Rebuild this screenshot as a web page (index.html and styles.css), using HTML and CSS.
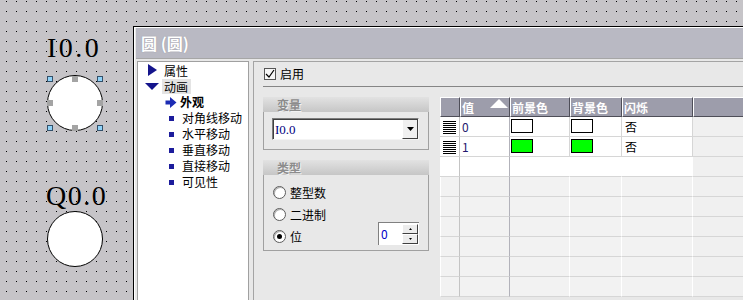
FILE: index.html
```html
<!DOCTYPE html>
<html lang="zh-CN">
<head>
    <meta charset="UTF-8">
    <meta name="viewport" content="width=device-width, initial-scale=1.0">
    <title>圆 (圆)</title>
    <link rel="stylesheet" href="styles.css">
</head>
<body>

    <!-- canvas objects -->
    <div class="tag tag-i">I0.0</div>
    <div class="lamp lamp-i">
        <span class="grip corner g-tl"></span>
        <span class="grip corner g-tr"></span>
        <span class="grip corner g-bl"></span>
        <span class="grip corner g-br"></span>
        <span class="grip mid g-t"></span>
        <span class="grip mid g-b"></span>
        <span class="grip mid g-l"></span>
        <span class="grip mid g-r"></span>
    </div>
    <div class="tag tag-q">Q0.0</div>
    <div class="lamp lamp-q"></div>

    <!-- properties window -->
    <div class="win">
        <div class="win-title">圆 (圆)</div>
        <div class="win-body">

            <ul class="tree">
                <li class="node">
                    <span class="tw"><svg width="9" height="12" viewBox="0 0 9 12"><polygon points="0,0 9,6 0,12" fill="#14148c"/></svg></span>
                    <span class="lbl">属性</span>
                </li>
                <li class="node">
                    <span class="tw"><svg width="14" height="7" viewBox="0 0 14 7"><polygon points="0,0 14,0 7,7" fill="#14148c"/></svg></span>
                    <span class="lbl sel">动画</span>
                </li>
                <li class="leaf cur">
                    <span class="ic"><svg width="12" height="11" viewBox="0 0 12 11"><path d="M0.5 3.5 H5 V0 L11.5 5.5 L5 11 V7.5 H0.5 Z" fill="#1c2cb4"/></svg></span>
                    <span class="lbl">外观</span>
                </li>
                <li class="leaf"><span class="ic"><i class="sq"></i></span><span class="lbl">对角线移动</span></li>
                <li class="leaf"><span class="ic"><i class="sq"></i></span><span class="lbl">水平移动</span></li>
                <li class="leaf"><span class="ic"><i class="sq"></i></span><span class="lbl">垂直移动</span></li>
                <li class="leaf"><span class="ic"><i class="sq"></i></span><span class="lbl">直接移动</span></li>
                <li class="leaf"><span class="ic"><i class="sq"></i></span><span class="lbl">可见性</span></li>
            </ul>

            <div class="pane">
                <div class="enable">
                    <span class="chk"><svg width="10" height="10" viewBox="0 0 10 10"><polyline points="1,5 4,8 9,1" fill="none" stroke="#000" stroke-width="1.2"/></svg></span>
                    <span>启用</span>
                </div>

                <div class="main">
                    <div class="groups">
                        <div class="group">
                            <div class="group-head">变量</div>
                            <div class="group-body var-body">
                                <div class="combo">
                                    <span class="combo-text">I0.0</span>
                                    <span class="combo-btn"><svg width="7" height="4" viewBox="0 0 7 4"><polygon points="0,0 7,0 3.5,4" fill="#000"/></svg></span>
                                </div>
                            </div>
                        </div>

                        <div class="group type-group">
                            <div class="group-head">类型</div>
                            <div class="group-body type-body">
                                <div class="opt"><span class="radio"></span>整型数</div>
                                <div class="opt"><span class="radio"></span>二进制</div>
                                <div class="opt">
                                    <span class="radio on"></span>位
                                    <div class="spin">
                                        <span class="spin-in">0</span>
                                        <span class="spin-btns">
                                            <span class="spin-btn"><svg width="3" height="2" viewBox="0 0 3 2"><polygon points="1.5,0 3,2 0,2" fill="#000"/></svg></span>
                                            <span class="spin-btn"><svg width="3" height="2" viewBox="0 0 3 2"><polygon points="0,0 3,0 1.5,2" fill="#000"/></svg></span>
                                        </span>
                                    </div>
                                </div>
                            </div>
                        </div>
                    </div>

                    <div class="grid">
                        <div class="hc"></div>
                        <div class="hc sort">值<span class="tri-up"></span></div>
                        <div class="hc">前景色</div>
                        <div class="hc">背景色</div>
                        <div class="hc">闪烁</div>
                        <div class="hc"></div>

                        <div class="c rh"><span class="ri"></span></div>
                        <div class="c cv num">0</div>
                        <div class="c sw"><span class="swatch"></span></div>
                        <div class="c sw"><span class="swatch"></span></div>
                        <div class="c txt">否</div>
                        <div class="c fill"></div>

                        <div class="c rh"><span class="ri"></span></div>
                        <div class="c cv num">1</div>
                        <div class="c sw"><span class="swatch green"></span></div>
                        <div class="c sw"><span class="swatch green"></span></div>
                        <div class="c txt">否</div>
                        <div class="c fill"></div>

                        <div class="c rh new"></div>
                        <div class="c cv new"></div>
                        <div class="c new open"></div>
                        <div class="c new open"></div>
                        <div class="c new open"></div>
                        <div class="c fill"></div>

                        <div class="c rh e"></div><div class="c cv e"></div><div class="c e"></div><div class="c e"></div><div class="c e"></div><div class="c fill"></div>
                        <div class="c rh e"></div><div class="c cv e"></div><div class="c e"></div><div class="c e"></div><div class="c e"></div><div class="c fill"></div>
                        <div class="c rh e"></div><div class="c cv e"></div><div class="c e"></div><div class="c e"></div><div class="c e"></div><div class="c fill"></div>
                        <div class="c rh e"></div><div class="c cv e"></div><div class="c e"></div><div class="c e"></div><div class="c e"></div><div class="c fill"></div>
                        <div class="c rh e"></div><div class="c cv e"></div><div class="c e"></div><div class="c e"></div><div class="c e"></div><div class="c fill"></div>
                        <div class="c rh e"></div><div class="c cv e"></div><div class="c e"></div><div class="c e"></div><div class="c e"></div><div class="c fill"></div>
                    </div>
                </div>
            </div>

        </div>
    </div>

</body>
</html>
```

FILE: styles.css
```css
* {
    box-sizing: border-box;
}
html, body {
    margin: 0;
}
body {
    position: relative;
    width: 743px;
    height: 300px;
    overflow: hidden;
    background-color: #c6c4c8;
    background-image: conic-gradient(from 270deg at 1px 1px, #000 90deg, transparent 0);
    background-size: 10px 10px;
    background-position: 6px 1px;
    font-family: "Noto Sans CJK SC", "Noto Sans", sans-serif;
    font-size: 12px;
    color: #000;
}

/* canvas objects */
.tag {
    position: absolute;
    font-family: "Liberation Serif", serif;
    font-size: 28px;
    line-height: 1;
    letter-spacing: 2.5px;
}
.tag-i { left: 47px; top: 34px; }
.tag-q { left: 46px; top: 182px; letter-spacing: 1.5px; }

.lamp {
    position: absolute;
    width: 56px;
    height: 56px;
    border: 1px solid #000;
    border-radius: 50%;
    background: #fff;
}
.lamp-i { left: 47px; top: 75px; }
.lamp-q { left: 47px; top: 211px; }

.grip {
    position: absolute;
    width: 6px;
    height: 6px;
}
.grip.corner {
    background: #8fd2f8;
    border: 1px solid #33506a;
}
.grip.mid {
    background: #a4a4a4;
}
.g-tl { left: -1px; top: 0; }
.g-tr { right: -1px; top: 0; }
.g-bl { left: -1px; bottom: -1px; }
.g-br { right: -1px; bottom: -1px; }
.g-t { left: 24px; top: 0; }
.g-b { left: 24px; bottom: -1px; }
.g-l { left: -1px; top: 24px; }
.g-r { right: -1px; top: 24px; }

/* window */
.win {
    position: absolute;
    left: 133px;
    top: 26px;
    width: 610px;
    height: 274px;
    overflow: hidden;
    border: 1px solid #000;
    border-right: 0;
    border-bottom: 0;
    padding: 1px 0 0 2px;
    background: #e8e8e8;
    box-shadow: inset 1px 1px 0 #fff;
}
.win-title {
    height: 31px;
    padding-left: 5px;
    background: #b9b9c3;
    border-bottom: 1px solid #a6a6a6;
    color: #fff;
    font-size: 16px;
    font-weight: bold;
    line-height: 30px;
    text-shadow: 0 0 1px #8c8c98;
}
.win-body {
    display: flex;
    padding: 2px 0 0 1px;
}

/* tree */
.tree {
    flex: none;
    width: 112px;
    height: 239px;
    margin: 0;
    padding: 0;
    list-style: none;
    background: #fff;
    border: 1px solid #a0a0a0;
    border-bottom: 0;
}
.tree li {
    display: flex;
    align-items: center;
    height: 16px;
    line-height: 16px;
    white-space: nowrap;
}
.tw {
    display: flex;
    justify-content: center;
    width: 14px;
    margin-left: 7px;
}
.node .lbl {
    margin-left: 3px;
    padding: 0 3px 0 2px;
    line-height: 15px;
}
.lbl.sel {
    background: #e4e4e4;
}
.leaf .ic {
    display: flex;
    justify-content: center;
    width: 12px;
    margin-left: 27px;
}
.leaf .lbl {
    margin-left: 5px;
}
.leaf.cur .lbl {
    margin-left: 3px;
    font-weight: bold;
}
.sq {
    display: block;
    width: 5px;
    height: 5px;
    background: #1c1c9c;
}

/* right pane */
.pane {
    flex: none;
    width: 490px;
    height: 239px;
    overflow: hidden;
    margin-left: 4px;
    border-left: 1px solid #a4a4a4;
    border-top: 1px solid #a4a4a4;
}
.enable {
    display: flex;
    align-items: center;
    gap: 4px;
    margin-left: 9px;
    padding: 6px 0 6px 1px;
    line-height: 12px;
    border-bottom: 1px solid #858585;
}
.chk {
    display: flex;
    align-items: center;
    justify-content: center;
    width: 12px;
    height: 12px;
    border: 1px solid #555;
    background: #f6f6f6;
}

.main {
    display: flex;
    gap: 11px;
    margin-top: 10px;
    padding-left: 9px;
}
.groups {
    flex: none;
    width: 166px;
}
.group-head {
    height: 15px;
    padding-left: 14px;
    background: linear-gradient(#e2e2e2, #c6c6c6);
    color: #8c8c8c;
    font-weight: bold;
    line-height: 15px;
    text-shadow: 1px 1px 0 #f2f2f2;
}
.group-body {
    border: 1px solid #a0a0a0;
    border-top: 0;
}
.var-body {
    padding: 6px 0 9px 8px;
}
.combo {
    display: flex;
    width: 147px;
    height: 22px;
    background: #fff;
    border: 1px solid;
    border-color: #7c7c7c #f4f4f4 #f4f4f4 #7c7c7c;
    box-shadow: inset 1px 1px 0 #404040;
}
.combo-text {
    padding: 1px 0 0 2px;
    font-family: "Liberation Serif", serif;
    font-size: 13px;
    line-height: 19px;
    color: #000080;
}
.combo-btn {
    display: flex;
    align-items: center;
    justify-content: center;
    width: 16px;
    margin: 1px 0 0 auto;
    background: #f0f0f0;
    border-right: 1px solid #404040;
    border-bottom: 1px solid #404040;
    border-left: 1px solid #fff;
}

.type-group {
    margin-top: 10px;
}
.type-body {
    padding: 6px 9px 3px 9px;
}
.opt {
    display: flex;
    align-items: center;
    gap: 4px;
    height: 22px;
}
.radio {
    position: relative;
    width: 13px;
    height: 13px;
    border: 1px solid #5c5c5c;
    border-radius: 50%;
    background: #fff;
    box-shadow: inset 1px 1px 0 #b0b0b0;
}
.radio.on::after {
    content: "";
    position: absolute;
    left: 3px;
    top: 3px;
    width: 5px;
    height: 5px;
    border-radius: 50%;
    background: #000;
}
.spin {
    display: flex;
    align-self: flex-start;
    width: 41px;
    height: 23px;
    margin: -3px 0 0 auto;
    padding: 1px 1px 1px 0;
    background: #fff;
    border-top: 1px solid #808080;
    border-left: 1px solid #808080;
}
.spin-in {
    flex: 1;
    padding-left: 2px;
    color: #0000c8;
    line-height: 20px;
}
.spin-btns {
    display: flex;
    flex-direction: column;
    width: 16px;
}
.spin-btn {
    display: flex;
    flex: 1;
    align-items: center;
    justify-content: center;
    background: #ececec;
    border-top: 1px solid #fff;
    border-left: 1px solid #fff;
    border-right: 1px solid #404040;
    border-bottom: 1px solid #404040;
}

/* animation table */
.grid {
    flex: none;
    display: grid;
    grid-template-columns: 20px 50px 60px 52px 71px 60px;
    grid-auto-rows: 20px;
}
.hc {
    display: flex;
    align-items: center;
    padding-left: 1px;
    background: #9d9dab;
    border-top: 1px solid #fff;
    border-left: 1px solid #fff;
    border-right: 1px solid #4e4e58;
    border-bottom: 1px solid #4e4e58;
    color: #fff;
    font-weight: bold;
}
.hc.sort {
    justify-content: space-between;
    padding-right: 1px;
}
.tri-up {
    align-self: flex-start;
    margin-top: 1px;
    width: 0;
    height: 0;
    border-left: 9px solid transparent;
    border-right: 9px solid transparent;
    border-bottom: 9px solid #fff;
}
.c {
    display: flex;
    align-items: center;
    background: #fff;
    border-right: 1px solid #d6d6d6;
    border-bottom: 1px solid #d6d6d6;
}
.c.rh {
    justify-content: center;
    align-items: flex-start;
    padding-top: 4px;
    border-right-color: #c4c4c4;
}
.c.cv {
    border-right-color: #b2b2ba;
}
.ri {
    width: 13px;
    height: 13px;
    background: repeating-linear-gradient(#000 0 1px, transparent 1px 2px);
}
.num {
    padding-left: 2px;
    color: #24186e;
}
.txt {
    padding-left: 3px;
}
.sw {
    align-items: flex-start;
    padding: 2px 0 0 1px;
}
.swatch {
    width: 22px;
    height: 14px;
    border: 1px solid #000;
    background: #fff;
}
.swatch.green {
    background: #00ff00;
}
.c.open {
    border-right-color: #fff;
}
.c.e {
    background: #f2f2f2;
    border-right-color: #fff;
}
.c.rh.e {
    border-left: 1px solid #fff;
    border-right-color: #c4c4c4;
}
.c.cv.e {
    border-right-color: #b2b2ba;
}
.c.fill {
    background: #f0f0f0;
    border-right: 0;
}
```
